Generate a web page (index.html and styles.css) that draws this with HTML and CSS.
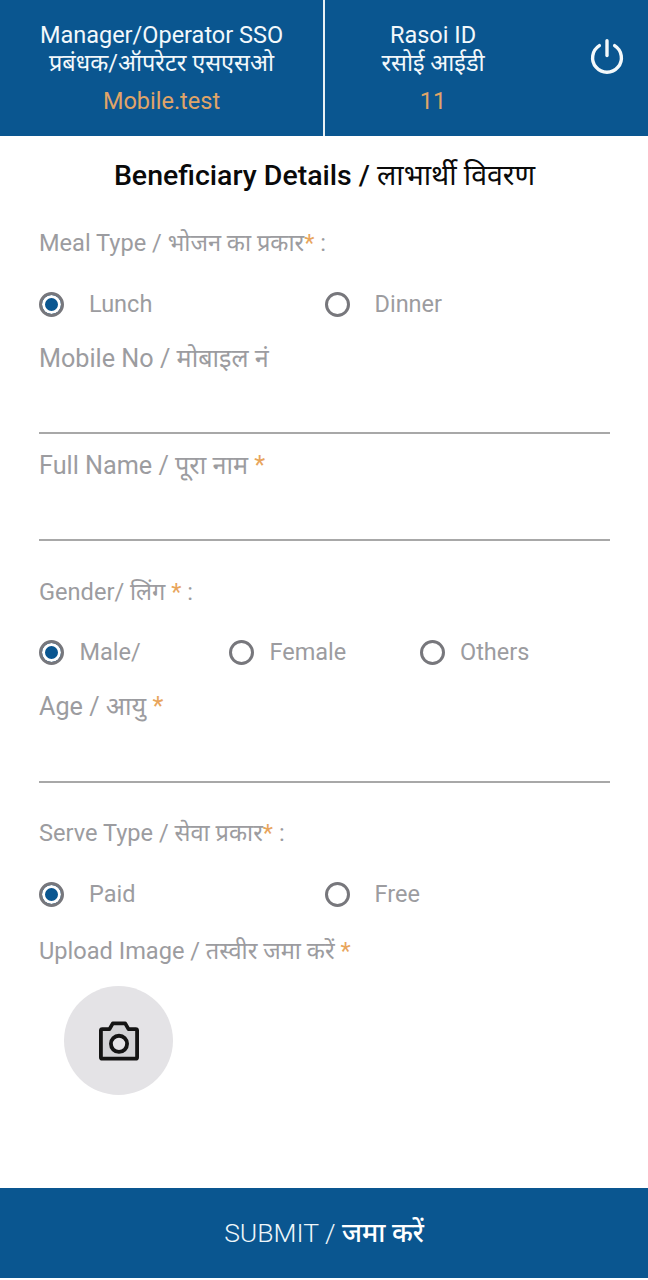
FILE: index.html
```html
<!DOCTYPE html>
<html lang="hi">
<head>
<meta charset="utf-8">
<title>Beneficiary Details</title>
<link rel="stylesheet" href="styles.css">
</head>
<body>
<div class="page">
  <header class="top">
    <div class="cell cell-left">
      <div class="names">Manager/Operator SSO<br>प्रबंधक/ऑपरेटर एसएसओ</div>
      <div class="value">Mobile.test</div>
    </div>
    <div class="cell cell-right">
      <div class="names">Rasoi ID<br>रसोई आईडी</div>
      <div class="value">11</div>
    </div>
    <svg class="power" viewBox="0 0 34 34" fill="none" stroke="#f4f9fb" stroke-width="3.2" stroke-linecap="round">
      <path d="M17 2.5v14"/>
      <path d="M9.8 7.2a13.6 13.6 0 1 0 14.4 0"/>
    </svg>
  </header>
  <main class="form">
    <h1 class="title">Beneficiary Details / <span class="light">लाभार्थी विवरण</span></h1>
    <div class="label small l-meal">Meal Type / भोजन का प्रकार<span class="req">*</span> :</div>
    <div class="radios two r-meal">
      <label class="radio wide"><span class="dot on"></span>Lunch</label>
      <label class="radio wide"><span class="dot"></span>Dinner</label>
    </div>
    <div class="field f-mobile"><div class="label">Mobile No / मोबाइल नं</div></div>
    <div class="field f-name"><div class="label">Full Name / पूरा नाम <span class="req">*</span></div></div>
    <div class="label small l-gender">Gender/ लिंग <span class="req">*</span> :</div>
    <div class="radios three r-gender">
      <label class="radio"><span class="dot on"></span>Male/</label>
      <label class="radio"><span class="dot"></span>Female</label>
      <label class="radio"><span class="dot"></span>Others</label>
    </div>
    <div class="field f-age"><div class="label">Age / आयु <span class="req">*</span></div></div>
    <div class="label small l-serve">Serve Type / सेवा प्रकार<span class="req">*</span> :</div>
    <div class="radios two r-serve">
      <label class="radio wide"><span class="dot on"></span>Paid</label>
      <label class="radio wide"><span class="dot"></span>Free</label>
    </div>
    <div class="label small l-upload">Upload Image / तस्वीर जमा करें <span class="req">*</span></div>
    <div class="camera">
      <svg viewBox="0 0 42 42" width="40" height="40">
        <path d="M3.500 8.500h7.500l3.500-6h13l3.500 6h7.500a1.500 1.500 0 0 1 1.500 1.500v28a1.500 1.500 0 0 1-1.500 1.500h-35a1.500 1.500 0 0 1-1.500-1.500v-28a1.500 1.500 0 0 1 1.500-1.500z" fill="#d3d3d6" stroke="#141414" stroke-width="4" stroke-linejoin="round"/>
        <circle cx="21" cy="24" r="8.500" fill="#e4e3e6" stroke="#141414" stroke-width="4"/>
      </svg>
    </div>
  </main>
  <footer class="submit"><span class="thin">SUBMIT / </span><span class="hi">जमा करें</span></footer>
</div>
</body>
</html>
```
FILE: styles.css
```css
* { box-sizing: border-box; }
html, body { margin: 0; padding: 0; background: #fff; }
body { font-family: Roboto, "Noto Sans", "Noto Sans Devanagari", sans-serif; }
.page { width: 648px; height: 1280px; display: flex; flex-direction: column; }
.top { height: 136px; background: #0a5690; display: flex; position: relative; color: #f2f8fb; flex: none; }
.cell { text-align: center; padding-top: 21px; }
.cell-left { width: 325px; border-right: 2px solid #e8f0f5; }
.cell-right { width: 216px; }
.names { font-size: 23.500px; line-height: 28px; }
.value { font-size: 23.500px; line-height: 28px; margin-top: 10px; color: #e0a468; }
.power { position: absolute; left: 589px; top: 38px; width: 36px; height: 36px; }
.form { flex: 1; padding: 0 38px 0 39px; display: flex; flex-direction: column; }
.title { margin: 0; height: 80px; padding-top: 21px; text-align: center; font-size: 28.500px; line-height: 38px; font-weight: 500; color: #0a0a0a; }
.light { font-weight: 400; }
.label { color: #9c9ca0; font-size: 25.200px; line-height: 30px; }
.small { font-size: 23.600px; }
.req { color: #e8a55c; }
.l-meal { height: 30px; margin-top: 12px; }
.radios { display: grid; align-items: center; color: #9c9ca0; font-size: 23.500px; }
.two { grid-template-columns: 286px 1fr; }
.three { grid-template-columns: 190px 190.500px 1fr; }
.r-meal { height: 30px; margin-top: 31px; }
.radio { display: flex; align-items: center; gap: 15.500px; }
.radio.wide { gap: 25px; }
.two .radio:last-child { gap: 24.500px; }
.dot { width: 25px; height: 25px; border: 3px solid #77777c; border-radius: 50%; flex: none; background: #fff; }
.dot.on { background: #0a5690; box-shadow: inset 0 0 0 3px #fff; }
.field { border-bottom: 2px solid #a8a8a8; }
.f-mobile { height: 90px; margin-top: 25px; }
.f-name { height: 90px; margin-top: 17px; }
.f-age { height: 91px; margin-top: 25px; }
.l-gender { height: 30px; margin-top: 36px; }
.r-gender { height: 30px; margin-top: 30px; }
.l-serve { height: 30px; margin-top: 35px; }
.r-serve { height: 30px; margin-top: 31px; }
.l-upload { height: 30px; margin-top: 27px; }
.camera { width: 109px; height: 109px; margin: 20px 0 0 25px; border-radius: 50%; background: #e4e3e6; display: flex; align-items: center; justify-content: center; }
.submit { height: 90px; flex: none; margin-bottom: 2px; padding-bottom: 2px; background: #0a5690; color: #eef6fa; display: flex; align-items: center; justify-content: center; font-size: 26.500px; white-space: pre; }
.thin { font-weight: 300; }
.hi { font-weight: 500; color: #fff; }
```
